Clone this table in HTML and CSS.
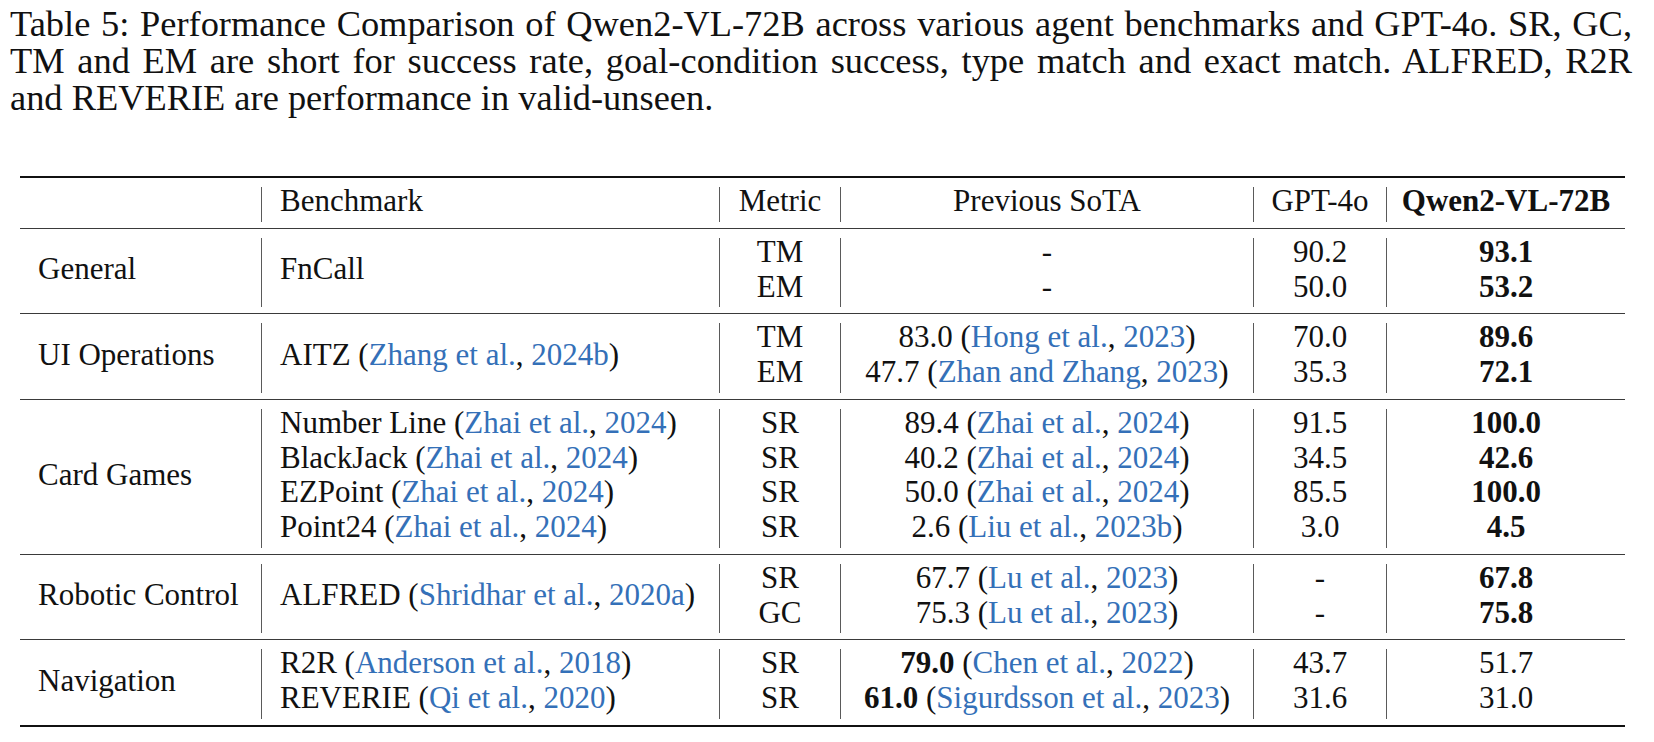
FILE: index.html
```html
<!DOCTYPE html>
<html lang="en">
<head>
<meta charset="utf-8">
<title>Table 5</title>
<link rel="stylesheet" href="styles.css">
</head>
<body>
<div class="page">
  <p class="caption">
    <span class="ln">Table 5: Performance Comparison of Qwen2-VL-72B across various agent benchmarks and GPT-4o. SR, GC,</span>
    <span class="ln">TM and EM are short for success rate, goal-condition success, type match and exact match. ALFRED, R2R</span>
    <span class="ln last">and REVERIE are performance in valid-unseen.</span>
  </p>

  <div class="tbl">
    <div class="grp head">
      <div class="lab"></div>
      <div class="bm">Benchmark</div>
      <div class="met">Metric</div>
      <div class="sota">Previous SoTA</div>
      <div class="gpt">GPT-4o</div>
      <div class="qw b">Qwen2-VL-72B</div>
    </div>

    <div class="grp">
      <div class="lab r2"><span>General</span></div>
      <div class="bm r2"><span>FnCall</span></div>
      <div class="met">TM</div>
      <div class="sota">-</div>
      <div class="gpt">90.2</div>
      <div class="qw b">93.1</div>
      <div class="met">EM</div>
      <div class="sota">-</div>
      <div class="gpt">50.0</div>
      <div class="qw b">53.2</div>
    </div>

    <div class="grp">
      <div class="lab r2"><span>UI Operations</span></div>
      <div class="bm r2"><span>AITZ (<span class="cite">Zhang et al.</span>, <span class="cite">2024b</span>)</span></div>
      <div class="met">TM</div>
      <div class="sota">83.0 (<span class="cite">Hong et al.</span>, <span class="cite">2023</span>)</div>
      <div class="gpt">70.0</div>
      <div class="qw b">89.6</div>
      <div class="met">EM</div>
      <div class="sota">47.7 (<span class="cite">Zhan and Zhang</span>, <span class="cite">2023</span>)</div>
      <div class="gpt">35.3</div>
      <div class="qw b">72.1</div>
    </div>

    <div class="grp">
      <div class="lab r4"><span>Card Games</span></div>
      <div class="bm">Number Line (<span class="cite">Zhai et al.</span>, <span class="cite">2024</span>)</div>
      <div class="met">SR</div>
      <div class="sota">89.4 (<span class="cite">Zhai et al.</span>, <span class="cite">2024</span>)</div>
      <div class="gpt">91.5</div>
      <div class="qw b">100.0</div>
      <div class="bm">BlackJack (<span class="cite">Zhai et al.</span>, <span class="cite">2024</span>)</div>
      <div class="met">SR</div>
      <div class="sota">40.2 (<span class="cite">Zhai et al.</span>, <span class="cite">2024</span>)</div>
      <div class="gpt">34.5</div>
      <div class="qw b">42.6</div>
      <div class="bm">EZPoint (<span class="cite">Zhai et al.</span>, <span class="cite">2024</span>)</div>
      <div class="met">SR</div>
      <div class="sota">50.0 (<span class="cite">Zhai et al.</span>, <span class="cite">2024</span>)</div>
      <div class="gpt">85.5</div>
      <div class="qw b">100.0</div>
      <div class="bm">Point24 (<span class="cite">Zhai et al.</span>, <span class="cite">2024</span>)</div>
      <div class="met">SR</div>
      <div class="sota">2.6 (<span class="cite">Liu et al.</span>, <span class="cite">2023b</span>)</div>
      <div class="gpt">3.0</div>
      <div class="qw b">4.5</div>
    </div>

    <div class="grp">
      <div class="lab r2"><span>Robotic Control</span></div>
      <div class="bm r2"><span>ALFRED (<span class="cite">Shridhar et al.</span>, <span class="cite">2020a</span>)</span></div>
      <div class="met">SR</div>
      <div class="sota">67.7 (<span class="cite">Lu et al.</span>, <span class="cite">2023</span>)</div>
      <div class="gpt">-</div>
      <div class="qw b">67.8</div>
      <div class="met">GC</div>
      <div class="sota">75.3 (<span class="cite">Lu et al.</span>, <span class="cite">2023</span>)</div>
      <div class="gpt">-</div>
      <div class="qw b">75.8</div>
    </div>

    <div class="grp last">
      <div class="lab r2"><span>Navigation</span></div>
      <div class="bm">R2R (<span class="cite">Anderson et al.</span>, <span class="cite">2018</span>)</div>
      <div class="met">SR</div>
      <div class="sota"><b>79.0</b> (<span class="cite">Chen et al.</span>, <span class="cite">2022</span>)</div>
      <div class="gpt">43.7</div>
      <div class="qw">51.7</div>
      <div class="bm">REVERIE (<span class="cite">Qi et al.</span>, <span class="cite">2020</span>)</div>
      <div class="met">SR</div>
      <div class="sota"><b>61.0</b> (<span class="cite">Sigurdsson et al.</span>, <span class="cite">2023</span>)</div>
      <div class="gpt">31.6</div>
      <div class="qw">31.0</div>
    </div>
  </div>
</div>
</body>
</html>
```

FILE: styles.css
```css
html, body {
  margin: 0;
  padding: 0;
  background: #ffffff;
}

body {
  font-family: "Liberation Serif", "Times New Roman", serif;
  color: #111111;
}

.page {
  width: 1654px;
  height: 742px;
  overflow: hidden;
}

.caption {
  margin: 0;
  padding: 6px 0 0 10px;
  width: 1622px;
  font-size: 36.4px;
  line-height: 37px;
}

.caption .ln {
  display: block;
  text-align: justify;
  text-align-last: justify;
  white-space: nowrap;
}

.caption .ln.last {
  text-align-last: left;
}

.tbl {
  margin: 59px 0 0 20px;
  width: 1605px;
  border-top: 2px solid #111111;
  font-size: 31px;
}

.grp {
  display: grid;
  grid-template-columns: 241px 458px 121px 413px 133px 239px;
  grid-auto-rows: 34.75px;
  padding: 9px 0 6px;
  border-bottom: 1px solid #3a3a3a;
}

.grp.last {
  border-bottom: 2px solid #111111;
}

.grp > div {
  line-height: 28px;
  white-space: nowrap;
}

.lab {
  grid-column: 1;
  padding-left: 18px;
}

.bm {
  grid-column: 2;
  padding-left: 18px;
  border-left: 1px solid #5a5a5a;
}

.met {
  grid-column: 3;
  text-align: center;
  border-left: 1px solid #5a5a5a;
}

.sota {
  grid-column: 4;
  text-align: center;
  border-left: 1px solid #5a5a5a;
}

.gpt {
  grid-column: 5;
  text-align: center;
  border-left: 1px solid #5a5a5a;
}

.qw {
  grid-column: 6;
  text-align: center;
  border-left: 1px solid #5a5a5a;
}

.r2 {
  grid-row: span 2;
}

.r4 {
  grid-row: span 4;
}

.r2, .r4 {
  display: flex;
  align-items: center;
  padding-bottom: 7px;
}

.b, b {
  font-weight: bold;
}

.cite {
  color: #3470b8;
}
```
